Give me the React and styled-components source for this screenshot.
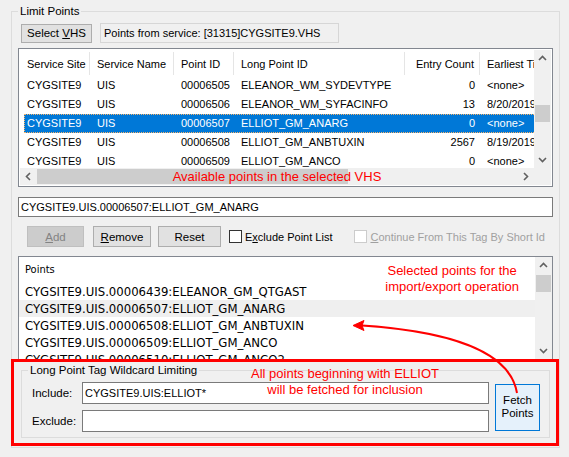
import React from 'react';
import styled, { createGlobalStyle } from 'styled-components';

const GlobalStyle = createGlobalStyle`
  * { box-sizing: border-box; }
  html, body { margin: 0; padding: 0; background: #f0f0f0; }
  body {
    font-family: "Liberation Sans", Arial, sans-serif;
    font-size: 11px;
    color: #000;
    overflow: hidden;
  }
`;

const columns = [
    { title: 'Service Site', width: 70 },
    { title: 'Service Name', width: 84 },
    { title: 'Point ID', width: 60 },
    { title: 'Long Point ID', width: 171 },
    { title: 'Entry Count', width: 75, right: true },
    { title: 'Earliest Time', width: 90 },
];

const rows = [
    ['CYGSITE9', 'UIS', '00006505', 'ELEANOR_WM_SYDEVTYPE', '0', '<none>'],
    ['CYGSITE9', 'UIS', '00006506', 'ELEANOR_WM_SYFACINFO', '13', '8/20/2019'],
    ['CYGSITE9', 'UIS', '00006507', 'ELLIOT_GM_ANARG', '0', '<none>'],
    ['CYGSITE9', 'UIS', '00006508', 'ELLIOT_GM_ANBTUXIN', '2567', '8/19/2019'],
    ['CYGSITE9', 'UIS', '00006509', 'ELLIOT_GM_ANCO', '0', '<none>'],
];

const points = [
    'CYGSITE9.UIS.00006439:ELEANOR_GM_QTGAST',
    'CYGSITE9.UIS.00006507:ELLIOT_GM_ANARG',
    'CYGSITE9.UIS.00006508:ELLIOT_GM_ANBTUXIN',
    'CYGSITE9.UIS.00006509:ELLIOT_GM_ANCO',
    'CYGSITE9.UIS.00006510:ELLIOT_GM_ANCO2',
];

const chevrons = {
    up: '1,6 4.5,2.5 8,6',
    down: '1,3 4.5,6.5 8,3',
    left: '6,1 2.5,4.5 6,8',
    right: '3,1 6.5,4.5 3,8',
};

const Chevron = ({ dir }) => (
    <svg width="9" height="9" viewBox="0 0 9 9">
        <polyline points={chevrons[dir]} fill="none" stroke="#606060" strokeWidth="1.6" />
    </svg>
);

const VScrollBar = ({ thumbTop }) => (
    <VScroll>
        <ArrowBox><Chevron dir="up" /></ArrowBox>
        <Track>
            <VThumb $top={thumbTop} />
        </Track>
        <ArrowBox><Chevron dir="down" /></ArrowBox>
    </VScroll>
);

export default function App() {
    return (
        <Page>
            <GlobalStyle />
            <Group>
                <Legend>Limit Points</Legend>

                <TopRow>
                    <Button $w={71} $h={19}>
                        <span>Select <u>V</u>HS</span>
                    </Button>
                    <ReadOnly>Points from service: [31315]CYGSITE9.VHS</ReadOnly>
                </TopRow>

                <ListView>
                    <DataPane>
                        <HeaderRow>
                            {columns.map((c) => (
                                <HeaderCell key={c.title} $right={c.right}>
                                    {c.title}
                                </HeaderCell>
                            ))}
                        </HeaderRow>
                        {rows.map((r, i) => (
                            <DataRow key={r[2]} $selected={i === 2}>
                                {r.map((v, j) => (
                                    <DataCell key={j} $first={j === 0} $right={columns[j].right}>
                                        {v}
                                    </DataCell>
                                ))}
                            </DataRow>
                        ))}
                    </DataPane>
                    <VScrollBar thumbTop={38} />
                    <HScroll>
                        <ArrowBox><Chevron dir="left" /></ArrowBox>
                        <HThumb />
                        <HTrack />
                        <ArrowBox><Chevron dir="right" /></ArrowBox>
                        <ScrollNote>Available points in the selected VHS</ScrollNote>
                    </HScroll>
                    <Corner />
                </ListView>

                <TextBox $mt={10}>CYGSITE9.UIS.00006507:ELLIOT_GM_ANARG</TextBox>

                <ButtonRow>
                    <Button $w={57} $h={21} $disabled>
                        <span><u>A</u>dd</span>
                    </Button>
                    <Button $w={58} $h={21} $ml={9}>
                        <span><u>R</u>emove</span>
                    </Button>
                    <Button $w={63} $h={21} $ml={7}>
                        Reset
                    </Button>
                    <Check $ml={8}>
                        <Box />
                        <span>E<u>x</u>clude Point List</span>
                    </Check>
                    <Check $ml={22} $disabled>
                        <Box $disabled />
                        <span><u>C</u>ontinue From This Tag By Short Id</span>
                    </Check>
                </ButtonRow>

                <PointsList>
                    <PointsPane>
                        <PointsHeader>Points</PointsHeader>
                        {points.map((p, i) => (
                            <PointRow key={p} $hover={i === 1}>
                                {p}
                            </PointRow>
                        ))}
                    </PointsPane>
                    <VScrollBar thumbTop={1} />
                    <SelectedNote>
                        Selected points for the
                        <br />
                        import/export operation
                    </SelectedNote>
                </PointsList>

                <Highlight>
                    <InnerGroup>
                        <Legend>Long Point Tag Wildcard Limiting</Legend>
                        <WildcardGrid>
                            <FieldLabel>Include:</FieldLabel>
                            <TextBox $h={22}>CYGSITE9.UIS:ELLIOT*</TextBox>
                            <FetchButton>
                                Fetch
                                <br />
                                Points
                            </FetchButton>
                            <FieldLabel>Exclude:</FieldLabel>
                            <TextBox $h={22} />
                        </WildcardGrid>
                    </InnerGroup>
                    <FetchNote>
                        All points beginning with ELLIOT
                        <br />
                        will be fetched for inclusion
                    </FetchNote>
                </Highlight>
            </Group>

            <ArrowLayer width="569" height="457" viewBox="0 0 569 457">
                <path d="M517 393 C 512 362, 475 333, 362 325.5" fill="none" stroke="#ff0000" strokeWidth="2" />
                <polygon points="353,325.5 364,320.5 362,325.5 364,330.5" fill="#ff0000" stroke="#ff0000" strokeWidth="1" />
            </ArrowLayer>
        </Page>
    );
}

const Page = styled.div`
    position: relative;
    width: 569px;
    height: 457px;
    padding: 4px 9px 0 11px;
`;

const Group = styled.fieldset`
    margin: 0;
    min-width: 0;
    height: 444px;
    border: 1px solid #dcdcdc;
    padding: 5px 6px 0;
`;

const Legend = styled.legend`
    padding: 0 2px;
    line-height: 14px;
    font-size: 11.5px;
`;

const TopRow = styled.div`
    display: flex;
    align-items: center;
    gap: 8px;
    height: 20px;
    padding-left: 3px;
`;

const Button = styled.div`
    display: flex;
    align-items: center;
    justify-content: center;
    width: ${(p) => p.$w}px;
    height: ${(p) => p.$h}px;
    margin-left: ${(p) => p.$ml || 0}px;
    background: ${(p) => (p.$disabled ? '#cccccc' : '#e1e1e1')};
    border: 1px solid ${(p) => (p.$disabled ? '#bfbfbf' : '#adadad')};
    color: ${(p) => (p.$disabled ? '#838383' : '#000')};
    font-size: 11.5px;
    white-space: nowrap;
`;

const ReadOnly = styled.div`
    display: flex;
    align-items: center;
    width: 239px;
    height: 20px;
    padding: 0 3px;
    border: 1px solid #d6d6d6;
    background: #f0f0f0;
`;

const ListView = styled.div`
    margin-top: 5px;
    height: 139px;
    border: 1px solid #828790;
    padding: 1px;
    background: #fff;
    display: grid;
    grid-template-columns: 1fr 17px;
    grid-template-rows: 1fr 17px;
`;

const DataPane = styled.div`
    overflow: hidden;
    background: #fff;
`;

const HeaderRow = styled.div`
    display: grid;
    grid-template-columns: ${columns.map((c) => c.width + 'px').join(' ')};
    width: max-content;
    height: 26px;
`;

const HeaderCell = styled.div`
    display: flex;
    align-items: center;
    justify-content: ${(p) => (p.$right ? 'flex-end' : 'flex-start')};
    padding: 0 ${(p) => (p.$right ? 5 : 0)}px 0 7px;
    margin: 2px 0 1px;
    border-right: 1px solid #e5e5e5;
    white-space: nowrap;
    overflow: hidden;
`;

const DataRow = styled.div`
    display: grid;
    grid-template-columns: ${columns.map((c, i) => (i === 0 ? c.width - 4 : c.width) + 'px').join(' ')};
    width: max-content;
    height: 19px;
    margin-left: 4px;
    background: ${(p) => (p.$selected ? '#0078d7' : 'transparent')};
    color: ${(p) => (p.$selected ? '#fff' : '#000')};
    outline: ${(p) => (p.$selected ? '1px dotted #f7b36a' : 'none')};
    outline-offset: -1px;
`;

const DataCell = styled.div`
    line-height: 19px;
    padding: 0 ${(p) => (p.$right ? 5 : 0)}px 0 ${(p) => (p.$first ? 3 : 7)}px;
    text-align: ${(p) => (p.$right ? 'right' : 'left')};
    white-space: nowrap;
    overflow: hidden;
`;

const VScroll = styled.div`
    display: flex;
    flex-direction: column;
    background: #f0f0f0;
`;

const ArrowBox = styled.div`
    flex: none;
    width: 17px;
    height: 17px;
    display: flex;
    align-items: center;
    justify-content: center;
`;

const Track = styled.div`
    flex: 1;
    display: flex;
    flex-direction: column;
    align-items: center;
`;

const VThumb = styled.div`
    width: 15px;
    height: 17px;
    margin-top: ${(p) => p.$top}px;
    background: #cdcdcd;
`;

const HScroll = styled.div`
    position: relative;
    display: flex;
    align-items: center;
    background: #f0f0f0;
`;

const HThumb = styled.div`
    width: 311px;
    height: 15px;
    background: #cdcdcd;
`;

const HTrack = styled.div`
    flex: 1;
`;

const Corner = styled.div`
    background: #f0f0f0;
`;

const Note = styled.div`
    position: absolute;
    color: #ff0000;
    font-size: 13px;
    line-height: 16px;
    text-align: center;
    white-space: nowrap;
    pointer-events: none;
`;

const ScrollNote = styled(Note)`
    left: 0;
    right: 0;
    top: 1px;
`;

const TextBox = styled.div`
    display: flex;
    align-items: center;
    height: ${(p) => p.$h || 20}px;
    margin-top: ${(p) => p.$mt || 0}px;
    padding: 0 2px;
    border: 1px solid #7a7a7a;
    background: #fff;
    white-space: nowrap;
`;

const ButtonRow = styled.div`
    display: flex;
    align-items: center;
    height: 21px;
    margin-top: 9px;
    padding-left: 9px;
`;

const Check = styled.div`
    display: flex;
    align-items: center;
    gap: 3px;
    margin-left: ${(p) => p.$ml}px;
    color: ${(p) => (p.$disabled ? '#a0a0a0' : '#000')};
    white-space: nowrap;
`;

const Box = styled.div`
    width: 13px;
    height: 13px;
    background: #fff;
    border: 1px solid ${(p) => (p.$disabled ? '#cccccc' : '#333333')};
`;

const PointsList = styled.div`
    position: relative;
    margin-top: 9px;
    height: 104px;
    border: 1px solid #828790;
    background: #fff;
    display: grid;
    grid-template-columns: 1fr 17px;
`;

const PointsPane = styled.div`
    overflow: hidden;
    font-family: "Liberation Sans Narrow", "DejaVu Sans Condensed", "Liberation Sans", sans-serif;
    font-size: 13px;
`;

const PointsHeader = styled.div`
    height: 26px;
    line-height: 26px;
    padding-left: 6px;
    font-size: 11px;
`;

const PointRow = styled.div`
    height: 17px;
    line-height: 17px;
    padding-left: 6px;
    background: ${(p) => (p.$hover ? '#efefef' : 'transparent')};
    white-space: nowrap;
`;

const SelectedNote = styled(Note)`
    right: 33px;
    top: 6px;
`;

const Highlight = styled.div`
    position: relative;
    margin: -1px -6px 0 -7px;
    border: 3px solid #ff0000;
    padding: 1px 6px 5px 7px;
`;

const InnerGroup = styled.fieldset`
    margin: 0;
    min-width: 0;
    height: 75px;
    border: 1px solid #dcdcdc;
    padding: 5px 6px 0;
`;

const WildcardGrid = styled.div`
    display: grid;
    grid-template-columns: 44px 407px 45px;
    grid-template-rows: 22px 22px;
    column-gap: 6px;
    row-gap: 6px;
    margin-left: 4px;
`;

const FieldLabel = styled.div`
    display: flex;
    align-items: center;
    font-size: 11.5px;
`;

const FetchButton = styled.div`
    grid-row: 1 / span 2;
    grid-column: 3;
    align-self: center;
    height: 47px;
    display: flex;
    align-items: center;
    justify-content: center;
    text-align: center;
    line-height: 13px;
    font-size: 11.5px;
    background: #e5f1fb;
    border: 1px solid #0078d7;
`;

const FetchNote = styled(Note)`
    left: 200px;
    width: 262px;
    top: 4px;
`;

const ArrowLayer = styled.svg`
    position: absolute;
    left: 0;
    top: 0;
    pointer-events: none;
`;
